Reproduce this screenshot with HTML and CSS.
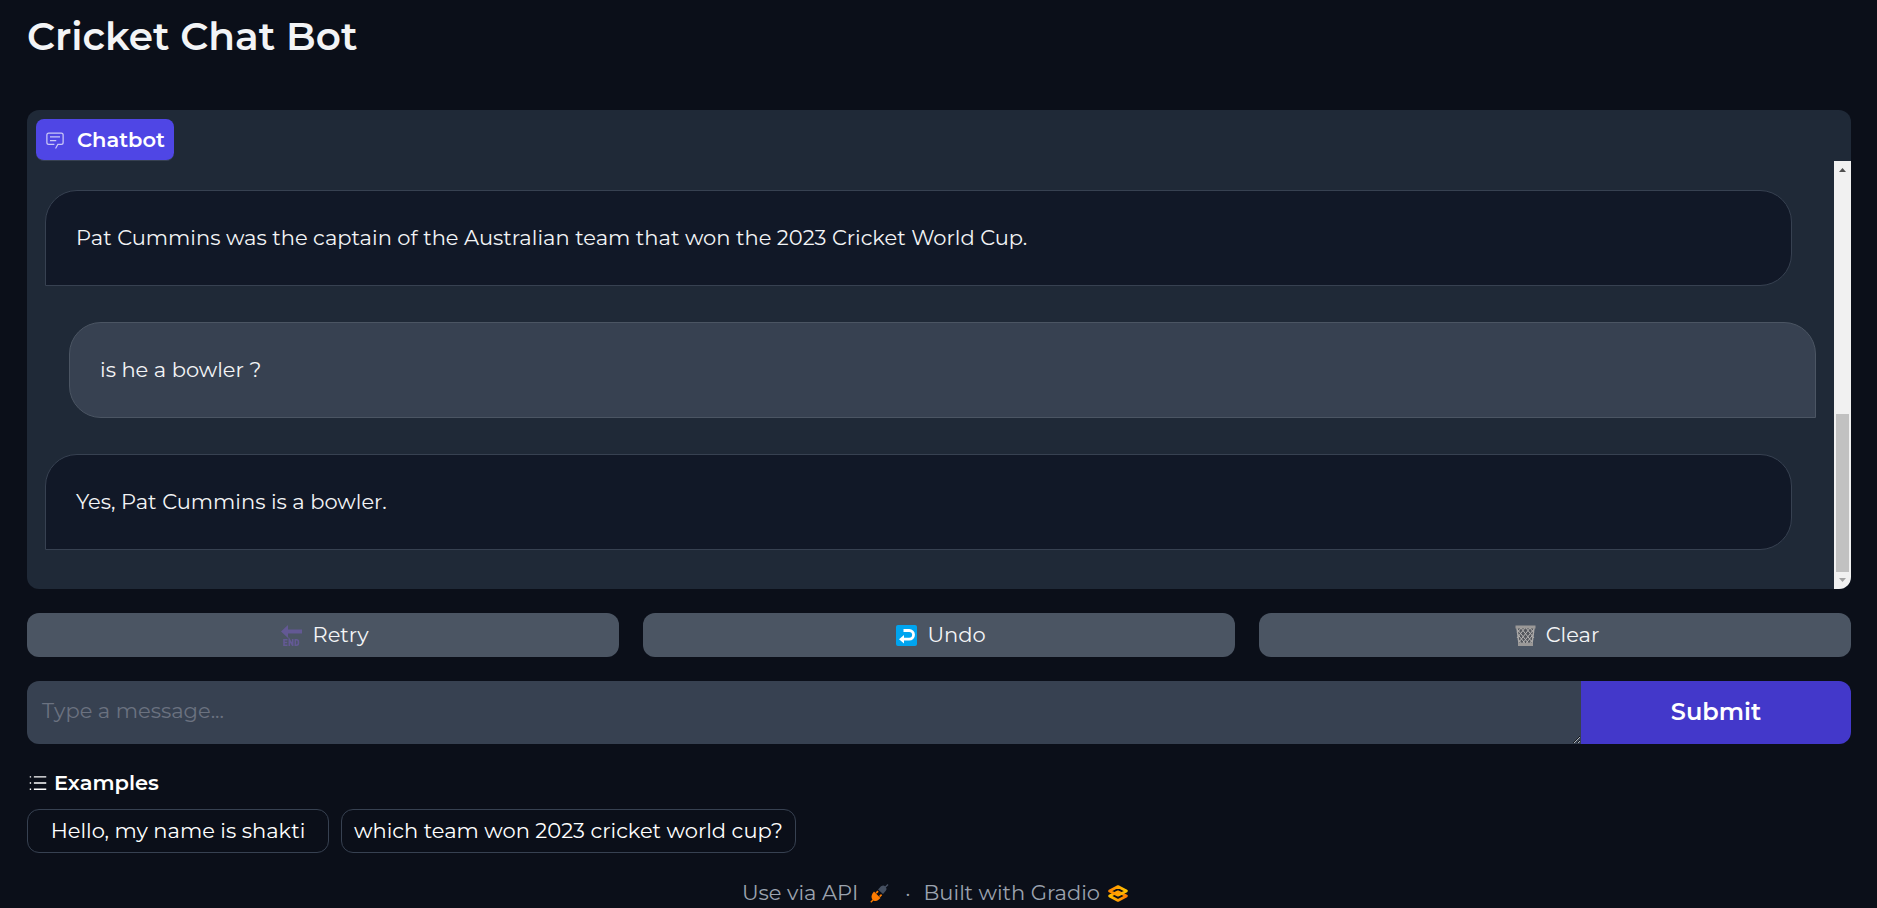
FILE: index.html
```html
<!DOCTYPE html>
<html lang="en">
<head>
<meta charset="utf-8">
<meta name="viewport" content="width=device-width, initial-scale=1">
<title>Cricket Chat Bot</title>
<link rel="stylesheet" href="styles.css">
</head>
<body>
<main class="app">
  <h1 class="title">Cricket Chat Bot</h1>

  <section class="panel" aria-label="Chatbot">
    <div class="panel-label">
      <svg class="label-icon" viewBox="0 0 32 32" aria-hidden="true"><path d="M17.74 30L16 29l4-7h6a2 2 0 0 0 2-2V8a2 2 0 0 0-2-2H6a2 2 0 0 0-2 2v12a2 2 0 0 0 2 2h9v2H6a4 4 0 0 1-4-4V8a4 4 0 0 1 4-4h20a4 4 0 0 1 4 4v12a4 4 0 0 1-4 4h-4.84Z"/><path d="M8 10h16v2H8zm0 6h10v2H8z"/></svg>
      <span>Chatbot</span>
    </div>
    <div class="panel-body">
      <div class="messages">
        <p class="message bot">Pat Cummins was the captain of the Australian team that won the 2023 Cricket World Cup.</p>
        <p class="message user">is he a bowler ?</p>
        <p class="message bot">Yes, Pat Cummins is a bowler.</p>
      </div>
      <div class="scrollbar" aria-hidden="true">
        <svg class="arrow" viewBox="0 0 17 17"><path fill="#505050" d="M5 11h7L8.500 7z"/></svg>
        <div class="track"><div class="thumb"></div></div>
        <svg class="arrow" viewBox="0 0 17 17"><path fill="#a3a3a3" d="M5 6h7L8.500 10z"/></svg>
      </div>
    </div>
  </section>

  <div class="actions">
    <button class="action" type="button">
      <svg class="emoji" viewBox="0 0 21 21" aria-hidden="true"><path fill="#635994" d="M0 6.500 7 0v4.500h14v4H7V13z"/><path fill="none" stroke="#635994" stroke-width="1.600" d="M6.500 14.800H3v5.400h3.500M3 17.500h3.200M8.300 21v-6.500l3.400 6V14M14.300 14.800h1.200q1.900 0 1.900 1.900v1.600q0 1.900-1.900 1.900h-1.200z"/></svg>
      <span>Retry</span>
    </button>
    <button class="action" type="button">
      <svg class="emoji" viewBox="0 0 21 21" aria-hidden="true"><rect width="21" height="21" rx="2" fill="#00a4ef"/><path d="M7.500 5.500h5.700a3.700 3.700 0 0 1 0 8.700H7" fill="none" stroke="#fff" stroke-width="2.800"/><path d="M3 14.200 8 10v8.400z" fill="#fff"/></svg>
      <span>Undo</span>
    </button>
    <button class="action" type="button">
      <svg class="emoji" viewBox="0 0 21 21" aria-hidden="true"><path d="M1.500 2h18l-2 17h-14z" fill="#53565c"/><path d="M2 4l12 15M6 3l11 14M11 3l8 10M15 3l4 5M2.500 9l8 10M3 14l4 5M19 4 7 19M15 3 4 17M10 3 2 13M6 3 2 8M18.500 9l-8 10M18 14l-4 5" stroke="#b5b3b2" stroke-width="1"/><path d="M2 3l2 16M19 3l-2 16" stroke="#aaa8a7" stroke-width="1.400"/><path d="M.5.500h20v3H.500zM3 18h15v3H3z" fill="#9b9998"/></svg>
      <span>Clear</span>
    </button>
  </div>

  <form class="composer">
    <textarea class="prompt" rows="1" aria-label="Message" placeholder="Type a message..."></textarea>
    <button class="submit" type="button">Submit</button>
  </form>

  <section class="examples" aria-labelledby="examples-title">
    <h2 class="examples-title" id="examples-title">
      <svg class="list-icon" viewBox="0 0 32 32" aria-hidden="true"><path d="M10 6h18v2H10zm0 18h18v2H10zm0-9h18v2H10zm-6 0h2v2H4zm0-9h2v2H4zm0 18h2v2H4z"/></svg>
      <span>Examples</span>
    </h2>
    <div class="chips">
      <button class="chip chip-wide" type="button">Hello, my name is shakti</button>
      <button class="chip" type="button">which team won 2023 cricket world cup?</button>
    </div>
  </section>

  <footer class="footer">
    <a class="footer-link api" href="#api">Use via API
      <svg class="plug" viewBox="0 0 19 19" aria-hidden="true"><g fill="#454f60"><path d="M8 5.500 11 2.200q2.500-1.700 4.300.2 2 2 .5 4.300L13 10z"/><path d="m14.500 3 3-3 1 1-3 3z"/></g><g fill="#ff7c00"><path d="M4 7.500 10.500 14 8.500 15.800Q6 18 3.500 16.500L1.300 18.700.3 17.700 2.500 15.500Q.5 13 2.500 9.500z"/><path d="m5.500 8.500 2-2 1.200 1.200-2 2zm3.500 3.500 2-2 1.200 1.200-2 2z"/></g></svg>
    </a>
    <span class="dot">·</span>
    <a class="footer-link" href="#gradio">Built with Gradio
      <svg class="gradio" viewBox="0 0 20 17" aria-hidden="true"><defs><linearGradient id="gold-top" x1="0" y1="0" x2="1" y2="0"><stop offset="0" stop-color="#ff8500"/><stop offset="1" stop-color="#ffc400"/></linearGradient><linearGradient id="gold-bottom" x1="0" y1="0" x2="1" y2="0"><stop offset="0" stop-color="#ffc000"/><stop offset="1" stop-color="#ff7c00"/></linearGradient></defs><path fill="none" stroke="url(#gold-bottom)" stroke-width="2.600" stroke-linejoin="round" d="M10 6.700 18.500 11 10 15.500 1.500 11z"/><path fill="none" stroke="url(#gold-top)" stroke-width="2.600" stroke-linejoin="round" d="M10 10.300 1.500 6 10 1.500 18.500 6z"/></svg>
    </a>
  </footer>
</main>
</body>
</html>
```

FILE: styles.css
```css
* { box-sizing: border-box; }

body {
  margin: 0;
  background: #0b0f19;
  color: #f3f4f6;
  font-family: Montserrat, Inter, "Open Sans", sans-serif;
  font-size: 21px;
  line-height: 32px;
}

button, textarea { font: inherit; color: inherit; border: 0; }
button { cursor: pointer; }
h1, h2, p { margin: 0; }
svg { display: block; flex: none; }

.app { padding: 12px 26px 0 27px; }

.title {
  margin-bottom: 50px;
  font-size: 39px;
  font-weight: 600;
  line-height: 48px;
}

.panel {
  overflow: hidden;
  border-radius: 12px;
  background: #1f2937;
}

.panel-label {
  display: flex;
  align-items: center;
  gap: 12px;
  width: fit-content;
  height: 42px;
  margin: 9px 0 0 9px;
  padding: 0 9px;
  border-bottom: 1px solid #374151;
  border-radius: 8px;
  background: #4f46e5;
  color: #fff;
  font-weight: 600;
}

.label-icon { width: 20px; height: 20px; fill: #fff; opacity: .7; }

.panel-body { display: flex; }

.messages {
  display: flex;
  flex: 1;
  flex-direction: column;
  gap: 36px;
  padding: 29px 18px 39px;
}

.message {
  padding: 31px 30px;
  border: 1px solid #374151;
  border-radius: 32px;
}

.bot {
  margin-right: 24px;
  border-bottom-left-radius: 0;
  background: #111827;
}

.user {
  margin-left: 24px;
  border-color: #4b5563;
  border-bottom-right-radius: 0;
  background: #374151;
}

.scrollbar {
  display: flex;
  flex-direction: column;
  width: 17px;
  background: #f1f1f1;
}

.arrow { width: 17px; height: 17px; }
.track { display: flex; flex: 1; align-items: flex-end; padding: 0 2px; }
.thumb { width: 100%; height: 40%; background: #c1c1c1; }

.actions {
  display: grid;
  grid-template-columns: repeat(3, 1fr);
  gap: 24px;
  margin-top: 24px;
}

.action {
  display: flex;
  align-items: center;
  justify-content: center;
  gap: 10px;
  padding: 6px 10px 6px 14px;
  border-radius: 12px;
  background: #4b5563;
}

.emoji { width: 21px; height: 21px; }

.composer {
  display: flex;
  height: 63px;
  margin-top: 24px;
  overflow: hidden;
  border-radius: 12px;
}

.prompt {
  flex: 1;
  padding: 14px 15px;
  outline: 0;
  background: #374151;
  resize: both;
}

.prompt::placeholder { color: #6b7280; opacity: 1; }

.submit {
  width: 270px;
  padding: 0 0 2px;
  background: #4338ca;
  color: #fff;
  font-size: 24px;
  font-weight: 600;
}

.examples { margin-top: 23px; color: #fff; }

.examples-title {
  display: flex;
  align-items: center;
  gap: 5px;
  font-size: 21px;
  font-weight: 600;
}

.list-icon { width: 22px; height: 22px; fill: #fff; }

.chips { display: flex; flex-wrap: wrap; gap: 12px; margin-top: 10px; }

.chip {
  padding: 5px 12px;
  border: 1px solid #374151;
  border-radius: 12px;
  background: transparent;
  color: #fff;
}

.chip-wide { min-width: 302px; }

.footer {
  display: flex;
  align-items: center;
  justify-content: center;
  gap: 13px;
  margin-top: 24px;
  padding-right: 8px;
  color: #9ca3af;
}

.footer-link {
  display: flex;
  align-items: center;
  gap: 8px;
  color: inherit;
  text-decoration: none;
}

.api { gap: 12px; padding-right: 3px; }
.plug { width: 19px; height: 19px; }
.gradio { width: 20px; height: 17px; }
```
